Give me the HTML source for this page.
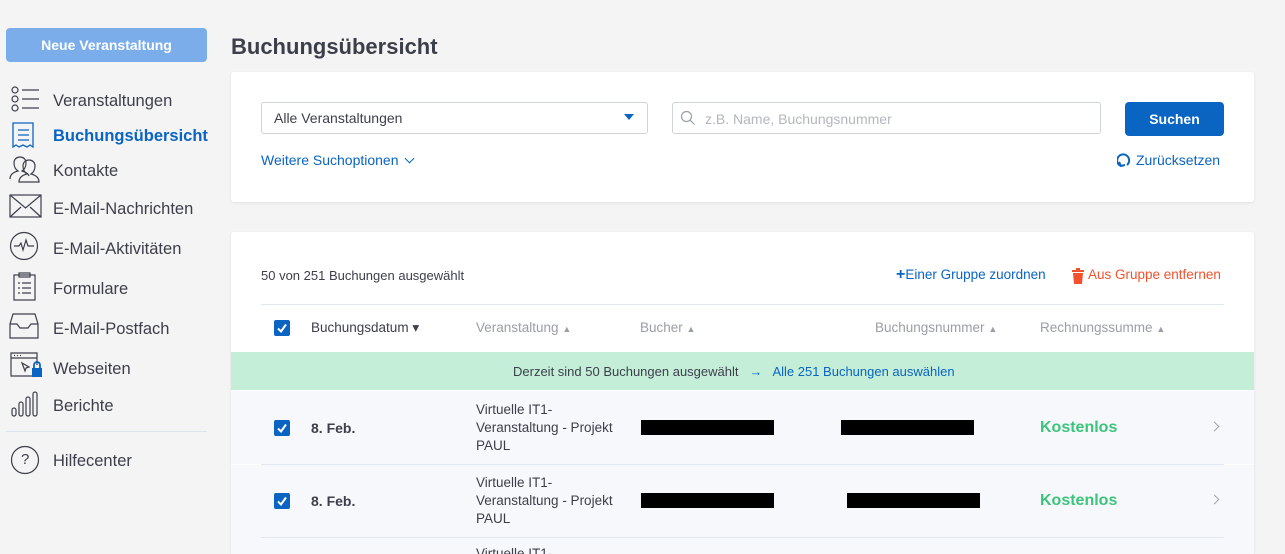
<!DOCTYPE html>
<html style="width:1285px;height:554px;overflow:hidden"><head><meta charset="utf-8"><style>
*{box-sizing:border-box;margin:0;padding:0}
body{width:1285px;height:554px;overflow:hidden;background:#f4f4f4;font-family:"Liberation Sans",sans-serif;color:#3c3f4a;position:relative}
.a{position:absolute;white-space:nowrap}
.btn{left:6px;top:28px;width:201px;height:34px;background:#7badea;border-radius:4px;color:#fff;font-weight:bold;font-size:14px;text-align:center;line-height:34px}
.nav{left:53px;font-size:16.5px;color:#3c3f4a}
.ic{position:absolute;left:9px}
.card{background:#fff;border-radius:3px;box-shadow:0 1px 3px rgba(0,0,0,.08)}
.s13{font-size:13px}
.blue{color:#0a64c2}
.hd{font-size:13.5px;color:#9a9ea6;top:320px}
.row{left:231px;width:1023px;height:73px;background:#f7f8fb}
.cb{width:16px;height:16px;background:#0a64c2;border-radius:2px}
.cb svg{display:block}
.blk{background:#000;height:15px;width:133px}
.green{color:#3cc47c;font-weight:bold;font-size:16px}
</style></head><body>
<div class="a btn">Neue Veranstaltung</div>

<svg class="ic" style="top:86px" width="32" height="28" viewBox="0 0 32 28" fill="none" stroke="#3c3f4a" stroke-width="1.2"><circle cx="6" cy="4" r="3"/><circle cx="6" cy="13" r="3"/><circle cx="6" cy="22" r="3"/><path d="M13 4h17M13 13h17M13 22h17"/></svg>
<div class="a nav" style="top:92px">Veranstaltungen</div>
<svg class="ic" style="top:121px" width="28" height="30" viewBox="0 0 28 30" fill="none" stroke="#0a64c2" stroke-width="1.3"><path d="M4 2h20v24l-3-2-3 2-4-2-4 2-3-2-3 2z"/><path d="M9 9h11M9 14h11M9 19h11"/></svg>
<div class="a nav" style="top:127px;color:#0a64c2;font-weight:bold">Buchungsübersicht</div>
<svg class="ic" style="top:155px" width="34" height="28" viewBox="0 0 34 28" fill="none" stroke="#3c3f4a" stroke-width="1.2"><path d="M1 24c0-5 4-7 8-8-3-2-4-5-4-8 0-4 3-6 6-6s6 2 6 6c0 3-1 6-4 8 3 1 6 2 7 5"/><path d="M10 27c0-5 4-7 8-8-3-2-4-5-4-8 0-4 3-6 6-6s6 2 6 6c0 3-1 6-4 8 4 1 8 3 8 8z"/></svg>
<div class="a nav" style="top:162px">Kontakte</div>
<svg class="ic" style="top:194px" width="33" height="24" viewBox="0 0 33 24" fill="none" stroke="#3c3f4a" stroke-width="1.2"><rect x="1" y="1" width="31" height="22"/><path d="M1 1l15.5 13L32 1M1 23l11-10M32 23L21 13"/></svg>
<div class="a nav" style="top:200px">E-Mail-Nachrichten</div>
<svg class="ic" style="top:231px" width="30" height="30" viewBox="0 0 30 30" fill="none" stroke="#3c3f4a" stroke-width="1.2"><circle cx="15" cy="15" r="13.5"/><path d="M5 15h5l2-3 2 7 3-10 2 6h6"/></svg>
<div class="a nav" style="top:240px">E-Mail-Aktivitäten</div>
<svg class="ic" style="top:272px" width="30" height="30" viewBox="0 0 30 30" fill="none" stroke="#3c3f4a" stroke-width="1.2"><rect x="5" y="3" width="21" height="25"/><rect x="10" y="1" width="11" height="4"/><path d="M9 11h2M13 11h9M9 16h2M13 16h9M9 21h2M13 21h9"/></svg>
<div class="a nav" style="top:280px">Formulare</div>
<svg class="ic" style="top:313px" width="30" height="26" viewBox="0 0 30 26" fill="none" stroke="#3c3f4a" stroke-width="1.2"><path d="M4 1h22l3 10v14H1V11z"/><path d="M1 11h7l3 4h8l3-4h7"/></svg>
<div class="a nav" style="top:320px">E-Mail-Postfach</div>
<svg class="ic" style="top:352px" width="34" height="26" viewBox="0 0 34 26" fill="none" stroke="#3c3f4a" stroke-width="1.2"><path d="M28 13V1H2v23h21M2 6h26"/><path d="M5 3.5h1M8 3.5h1M11 3.5h1"/><path d="M13 11l3 8 1-3 3-1z"/><rect x="23" y="16" width="10" height="9" fill="#0a64c2" stroke="none"/><path d="M25 16v-3a3 3 0 016 0v3" stroke="#0a64c2" stroke-width="1.8"/></svg>
<div class="a nav" style="top:360px">Webseiten</div>
<svg class="ic" style="top:391px;left:11px" width="28" height="26" viewBox="0 0 28 26" fill="none" stroke="#3c3f4a" stroke-width="1.2"><rect x="1" y="17" width="4" height="8" rx="2"/><rect x="8" y="11" width="4" height="14" rx="2"/><rect x="15" y="6" width="4" height="19" rx="2"/><rect x="22" y="1" width="4" height="24" rx="2"/></svg>
<div class="a nav" style="top:397px">Berichte</div>
<div class="a" style="left:6px;top:431px;width:201px;height:1px;background:#dde4ee"></div>
<svg class="ic" style="top:445px;left:10px" width="30" height="30" viewBox="0 0 30 30" fill="none" stroke="#3c3f4a" stroke-width="1.2"><circle cx="15" cy="15" r="13.5"/></svg>
<div class="a" style="left:21px;top:451px;font-size:15px">?</div>
<div class="a nav" style="top:452px">Hilfecenter</div>

<div class="a" style="left:231px;top:34px;font-size:22px;font-weight:bold;color:#3c3f4a">Buchungsübersicht</div>

<div class="a card" style="left:231px;top:72px;width:1023px;height:130px"></div>
<div class="a" style="left:261px;top:102px;width:387px;height:32px;border:1px solid #cfd3da;border-radius:3px"></div>
<div class="a s13" style="left:274px;top:110px;font-size:14px">Alle Veranstaltungen</div>
<div class="a" style="left:624px;top:114px;width:0;height:0;border-left:5px solid transparent;border-right:5px solid transparent;border-top:6px solid #0a64c2"></div>
<div class="a" style="left:672px;top:102px;width:429px;height:32px;border:1px solid #cfd3da;border-radius:3px"></div>
<svg class="a" style="left:680px;top:110px" width="16" height="16" viewBox="0 0 16 16" fill="none" stroke="#9aa0a8" stroke-width="1.2"><circle cx="6.5" cy="6.5" r="5"/><path d="M10 10l4.5 4.5"/></svg>
<div class="a s13" style="left:705px;top:111px;font-size:14px;color:#b3b7bd">z.B. Name, Buchungsnummer</div>
<div class="a" style="left:1125px;top:102px;width:99px;height:34px;background:#0a64c2;border-radius:4px;color:#fff;font-weight:bold;font-size:14px;text-align:center;line-height:34px">Suchen</div>
<div class="a blue" style="left:261px;top:152px;font-size:14px">Weitere Suchoptionen <span style="display:inline-block;width:7px;height:7px;border-right:1.3px solid #0a64c2;border-bottom:1.3px solid #0a64c2;transform:rotate(45deg);margin:0 0 3px 4px"></span></div>
<svg class="a" style="left:1117px;top:152px" width="14" height="16" viewBox="0 0 14 16" fill="none" stroke="#0a64c2" stroke-width="2"><path d="M4 14A6 6 0 1 1 10 13"/><path d="M2 10l2 4 4-1"/></svg>
<div class="a blue" style="left:1136px;top:152px;font-size:14px">Zurücksetzen</div>

<div class="a card" style="left:231px;top:232px;width:1023px;height:322px;border-radius:3px 3px 0 0"></div>
<div class="a" style="left:261px;top:268px;font-size:13px">50 von 251 Buchungen ausgewählt</div>
<div class="a blue" style="left:896px;top:267px;font-size:13.5px"><b style="font-size:16px;line-height:13px">+</b>Einer Gruppe zuordnen</div>
<svg class="a" style="left:1072px;top:268px" width="12" height="16" viewBox="0 0 12 16"><rect x="0" y="2" width="12" height="2" fill="#f0522d"/><rect x="4" y="0" width="4" height="2" fill="#f0522d"/><path d="M1 5h10l-1 11H2z" fill="#f0522d"/></svg>
<div class="a" style="left:1088px;top:267px;font-size:13.5px;color:#f0522d">Aus Gruppe entfernen</div>
<div class="a" style="left:261px;top:304px;width:963px;height:1px;background:#e1e8f2"></div>
<div class="a cb" style="left:274px;top:320px"><svg width="16" height="16"><path d="M4 8.5l3 3 5-7" stroke="#fff" stroke-width="2" fill="none"/></svg></div>
<div class="a hd" style="left:311px;color:#3c3f4a">Buchungsdatum ▾</div>
<div class="a hd" style="left:476px">Veranstaltung <span style="font-size:9px">▲</span></div>
<div class="a hd" style="left:640px">Bucher <span style="font-size:9px">▲</span></div>
<div class="a hd" style="left:875px">Buchungsnummer <span style="font-size:9px">▲</span></div>
<div class="a hd" style="left:1040px">Rechnungssumme <span style="font-size:9px">▲</span></div>
<div class="a" style="left:231px;top:352px;width:1023px;height:38px;background:#c5eed9"></div>
<div class="a" style="left:513px;top:364px;font-size:13px">Derzeit sind 50 Buchungen ausgewählt &nbsp; <span class="blue">→ &nbsp; Alle 251 Buchungen auswählen</span></div>

<div class="a row" style="top:391px"></div>
<div class="a row" style="top:465px"></div>
<div class="a row" style="top:538px;height:16px"></div>
<div class="a" style="left:261px;top:464px;width:963px;height:1px;background:#e1e8f2"></div>
<div class="a" style="left:261px;top:537px;width:963px;height:1px;background:#e1e8f2"></div>

<div class="a cb" style="left:274px;top:420px"><svg width="16" height="16"><path d="M4 8.5l3 3 5-7" stroke="#fff" stroke-width="2" fill="none"/></svg></div>
<div class="a" style="left:311px;top:420px;font-size:14px;font-weight:bold">8. Feb.</div>
<div class="a" style="left:476px;top:401px;font-size:13.5px;line-height:18px">Virtuelle IT1-<br>Veranstaltung - Projekt<br>PAUL</div>
<div class="a blk" style="left:641px;top:420px"></div>
<div class="a blk" style="left:841px;top:420px"></div>
<div class="a green" style="left:1040px;top:419px">Kostenlos</div>
<div class="a" style="left:1211px;top:423px;width:7px;height:7px;border-right:1.3px solid #a0a4aa;border-top:1.3px solid #a0a4aa;transform:rotate(45deg)"></div>

<div class="a cb" style="left:274px;top:493px"><svg width="16" height="16"><path d="M4 8.5l3 3 5-7" stroke="#fff" stroke-width="2" fill="none"/></svg></div>
<div class="a" style="left:311px;top:493px;font-size:14px;font-weight:bold">8. Feb.</div>
<div class="a" style="left:476px;top:474px;font-size:13.5px;line-height:18px">Virtuelle IT1-<br>Veranstaltung - Projekt<br>PAUL</div>
<div class="a blk" style="left:641px;top:493px"></div>
<div class="a blk" style="left:847px;top:493px"></div>
<div class="a green" style="left:1040px;top:492px">Kostenlos</div>
<div class="a" style="left:1211px;top:496px;width:7px;height:7px;border-right:1.3px solid #a0a4aa;border-top:1.3px solid #a0a4aa;transform:rotate(45deg)"></div>

<div class="a" style="left:476px;top:545px;font-size:13.5px;line-height:18px">Virtuelle IT1-</div>
</body></html>
